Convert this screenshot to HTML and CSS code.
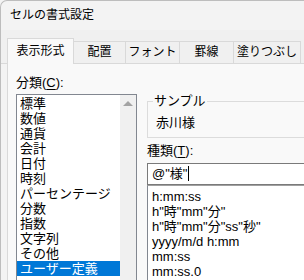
FILE: index.html
```html
<!DOCTYPE html>
<html>
<head>
  <meta charset="UTF-8">
  <title>セルの書式設定</title>
  <link rel="stylesheet" href="styles.css">
</head>
<body>
  <div class="window">
    <div class="title-bar">セルの書式設定</div>

    <div class="tabs">
      <div class="tab active">表示形式</div>
      <div class="tab tab-narrow">配置</div>
      <div class="tab">フォント</div>
      <div class="tab">罫線</div>
      <div class="tab tab-wide">塗りつぶし</div>
    </div>

    <div class="panel">
      <div class="left-col">
        <div class="label">分類(<u>C</u>):</div>
        <div class="category-list">
          <div class="list-items">
            <div class="item">標準</div>
            <div class="item">数値</div>
            <div class="item">通貨</div>
            <div class="item">会計</div>
            <div class="item">日付</div>
            <div class="item">時刻</div>
            <div class="item">パーセンテージ</div>
            <div class="item">分数</div>
            <div class="item">指数</div>
            <div class="item">文字列</div>
            <div class="item">その他</div>
            <div class="item selected">ユーザー定義</div>
          </div>
          <div class="scrollbar">
            <div class="arrow-up"></div>
          </div>
        </div>
      </div>

      <div class="right-col">
        <fieldset class="sample">
          <legend>サンプル</legend>
          <div class="sample-text">赤川様</div>
        </fieldset>

        <div class="label">種類(<u>T</u>):</div>
        <div class="format-input">@"様"<span class="caret"></span></div>
        <div class="format-list">
          <div class="item">h:mm:ss</div>
          <div class="item">h"時"mm"分"</div>
          <div class="item">h"時"mm"分"ss"秒"</div>
          <div class="item">yyyy/m/d h:mm</div>
          <div class="item">mm:ss</div>
          <div class="item">mm:ss.0</div>
        </div>
      </div>
    </div>
  </div>
</body>
</html>
```

FILE: styles.css
```css
body {
  margin: 0;
  width: 304px;
  height: 280px;
  overflow: hidden;
  background-color: #f3f3f3;
  font-family: "Liberation Sans", "Noto Sans CJK JP", sans-serif;
  font-size: 13px;
  color: #000;
}
.window {
  height: 280px;
  border-left: 1px solid #bdbdbd;
  border-top: 1px solid #bdbdbd;
  border-top-left-radius: 7px;
  box-sizing: border-box;
}
.title-bar {
  height: 29px;
  line-height: 28px;
  padding-left: 9px;
  font-size: 12px;
}
.tabs {
  display: flex;
  align-items: flex-end;
  height: 33px;
  padding-left: 6px;
  background-color: #f0f0f0;
  border-bottom: 1px solid #d9d9d9;
}
.tab {
  width: 53px;
  height: 21px;
  line-height: 21px;
  text-align: center;
  font-size: 12px;
  border: 1px solid #d9d9d9;
  border-bottom: none;
  margin-left: -1px;
  background-color: #f0f0f0;
}
.tab-narrow {
  width: 51px;
}
.tab-wide {
  width: 66px;
}
.tab.active {
  width: 65px;
  height: 25px;
  line-height: 24px;
  margin-left: 0;
  margin-bottom: -1px;
  background-color: #f9f9f9;
  position: relative;
  z-index: 1;
}
.panel {
  display: flex;
  gap: 10px;
  margin-left: 6px;
  height: 220px;
  padding-left: 8px;
  background-color: #f9f9f9;
  border-left: 1px solid #d9d9d9;
}
.left-col {
  width: 121px;
  flex-shrink: 0;
}
.label {
  height: 18px;
  line-height: 18px;
  margin-top: 10px;
  margin-bottom: 2px;
}
.label u {
  text-underline-offset: 2px;
}
.category-list {
  display: flex;
  height: 200px;
  background-color: #fff;
  border: 1px solid #828790;
}
.list-items {
  flex: 1;
  padding-top: 1px;
}
.item {
  height: 15px;
  line-height: 15px;
  padding-left: 3px;
  white-space: nowrap;
}
.item.selected {
  background-color: #0078d7;
  color: #fff;
}
.scrollbar {
  width: 16px;
  background-color: #f0f0f0;
  display: flex;
  justify-content: center;
}
.arrow-up {
  margin-top: 6px;
  width: 0;
  height: 0;
  border-left: 5px solid transparent;
  border-right: 5px solid transparent;
  border-bottom: 5px solid #a3a3a3;
}
.right-col {
  width: 170px;
  flex-shrink: 0;
}
.sample {
  margin: 30px 0 0 0;
  padding: 0 0 0 8px;
  height: 44px;
  box-sizing: border-box;
  border: 1px solid #dcdcdc;
}
.sample legend {
  padding: 0 1px;
  margin-left: -3px;
  line-height: 14px;
}
.sample-text {
  line-height: 22px;
  padding-top: 4px;
}
.right-col .label {
  margin-top: 4px;
  margin-bottom: 3px;
}
.format-input {
  height: 20px;
  line-height: 20px;
  padding-left: 4px;
  background-color: #fff;
  border: 1px solid #7a7a7a;
}
.caret {
  display: inline-block;
  width: 1px;
  height: 15px;
  margin-left: 1px;
  vertical-align: -3px;
  background-color: #000;
}
.format-list {
  height: 120px;
  padding-top: 3px;
  background-color: #fff;
  border: 1px solid #828790;
  border-top: 1px solid #a0a0a0;
}
.format-list .item {
  padding-left: 4px;
}
```
